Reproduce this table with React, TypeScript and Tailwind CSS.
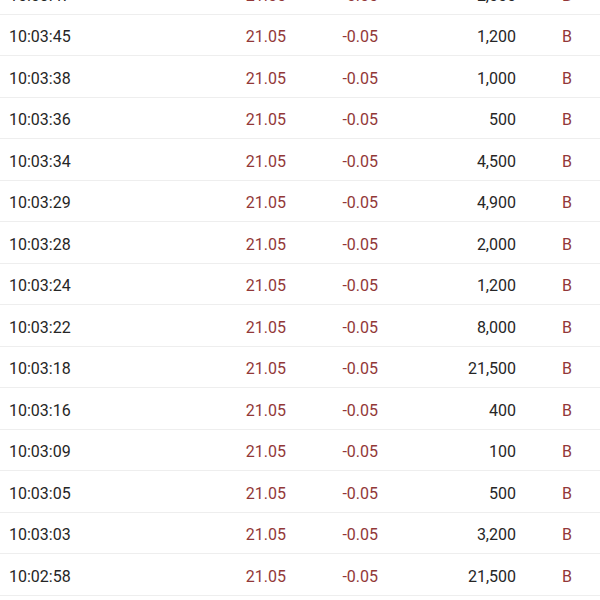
import React from "react";

const rows: [string, string][] = [
  ["10:03:47", "2,000"],
  ["10:03:45", "1,200"],
  ["10:03:38", "1,000"],
  ["10:03:36", "500"],
  ["10:03:34", "4,500"],
  ["10:03:29", "4,900"],
  ["10:03:28", "2,000"],
  ["10:03:24", "1,200"],
  ["10:03:22", "8,000"],
  ["10:03:18", "21,500"],
  ["10:03:16", "400"],
  ["10:03:09", "100"],
  ["10:03:05", "500"],
  ["10:03:03", "3,200"],
  ["10:02:58", "21,500"],
];

export default function App() {
  return (
    <div
      className="w-[600px] h-[600px] overflow-hidden bg-white"
      style={{ fontFamily: "Roboto, 'Noto Sans', sans-serif" }}
    >
      <div className="-mt-[27px]">
        {rows.map(([t, v], i) => (
          <div
            key={i}
            className="flex items-center h-[41.5px] pt-[5px] border-b-[1.5px] border-[#eeeeee] text-[16px]"
          >
            <div className="w-[200px] pl-[9px] text-[#262626]">{t}</div>
            <div className="w-[86px] text-right text-[#923838]">21.05</div>
            <div className="w-[92px] text-right text-[#923838]">-0.05</div>
            <div className="w-[138px] text-right text-[#262626]">{v}</div>
            <div className="w-[84px] pl-[46px] text-[#923838]">B</div>
          </div>
        ))}
      </div>
    </div>
  );
}
